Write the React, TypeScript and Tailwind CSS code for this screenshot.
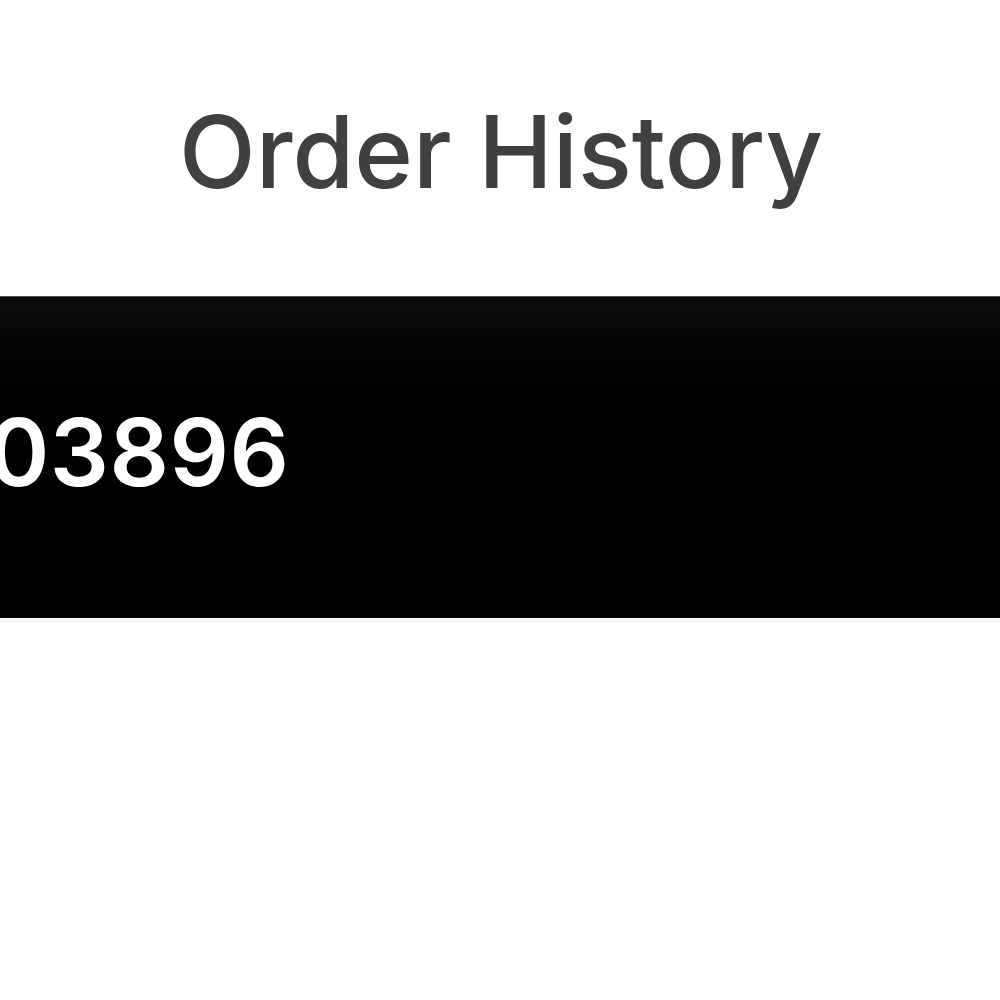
import React from 'react';

const App: React.FC = () => {
  return (
    <div className="w-[1000px] h-[1000px] bg-white overflow-hidden flex flex-col" style={{ fontFamily: 'Inter, "Noto Sans", sans-serif' }}>
      {/* Page title */}
      <header className="h-[296px] flex justify-center pt-[92px]">
        <h1 className="text-[100px] leading-[120px] font-medium text-[#404040] tracking-[0px] pl-[2px]">Order History</h1>
      </header>

      {/* Order number banner */}
      <div className="h-[322px] bg-black bg-gradient-to-b from-[#0e0e0e] via-black to-black border-t border-[#555] flex items-center overflow-hidden pb-[10px]">
        <span className="-ml-[12px] text-white text-[93px] font-semibold leading-none tracking-[0.5px]">03896</span>
      </div>

      <div className="flex-1 bg-white" />
    </div>
  );
};

export default App;
